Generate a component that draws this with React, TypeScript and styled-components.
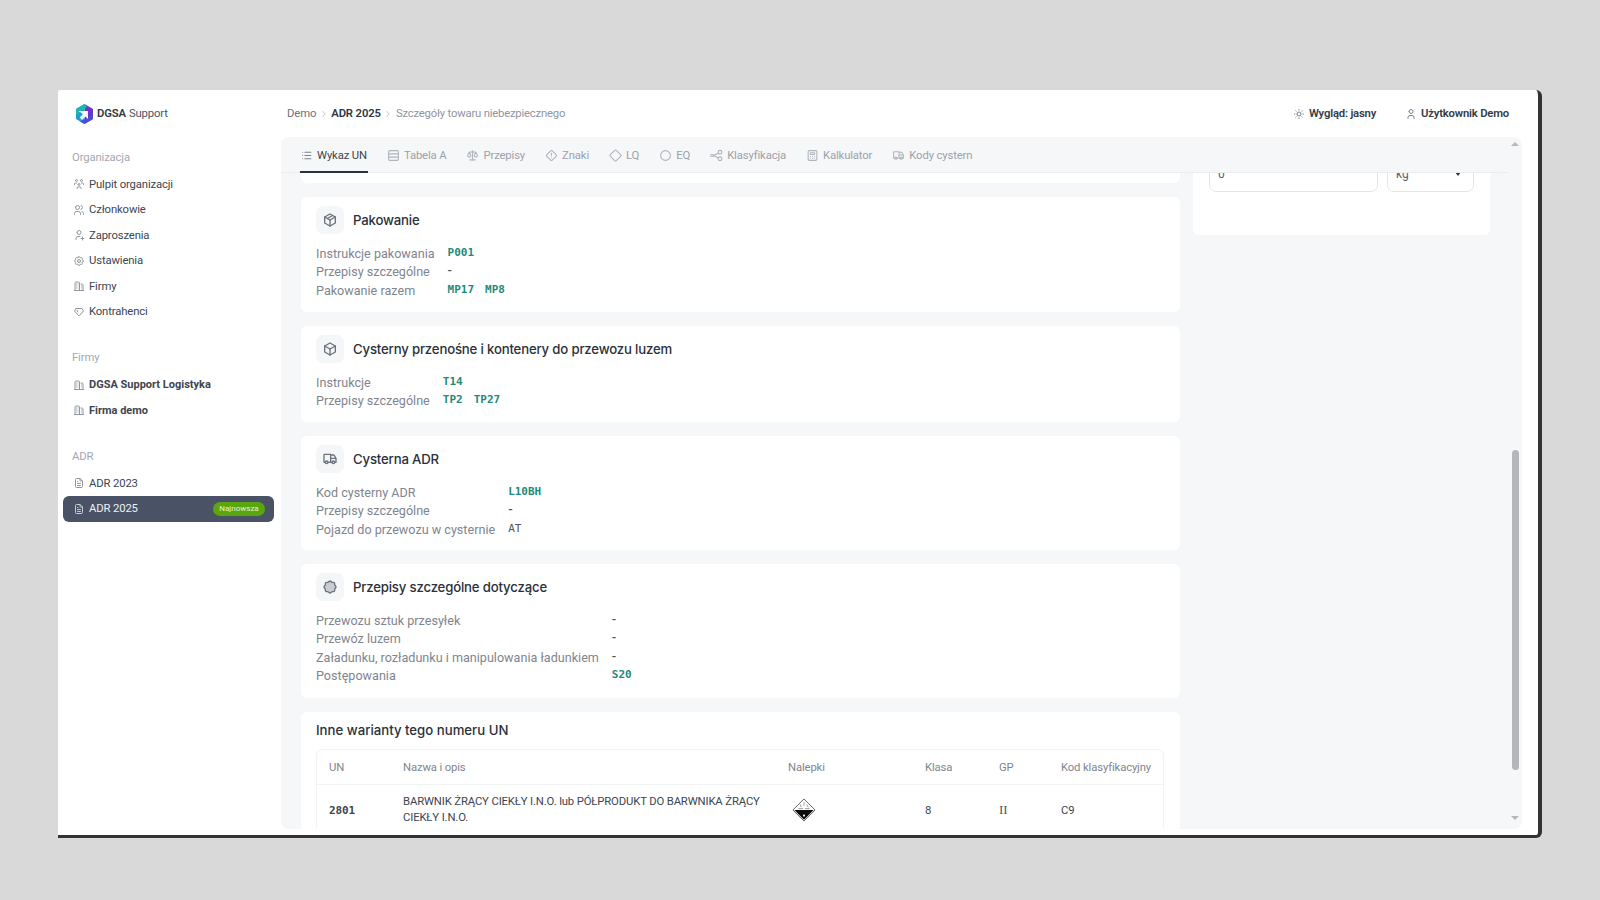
import React from "react";
import styled, { createGlobalStyle } from "styled-components";
import {
  TbUsersGroup, TbUsers, TbUserPlus, TbSettings, TbBuildings, TbDiamond, TbFileText,
  TbSun, TbUser, TbList, TbScale, TbSquareRotated, TbCircle,
  TbCalculator, TbTruck, TbPackage, TbBox, TbRosette, TbChevronRight,
} from "react-icons/tb";
import { Rows3 } from "lucide-react";

const sans = `Roboto, "Noto Sans", "Liberation Sans", sans-serif`;
const head = `Inter, "Open Sans", "Liberation Sans", sans-serif`;
const mono = `"DejaVu Sans Mono", "Liberation Mono", monospace`;

const Global = createGlobalStyle`
  html, body { margin: 0; padding: 0; background: #d9d9d9; }
  body { font-family: ${sans}; }
  * { box-sizing: border-box; }
`;

const Page = styled.div`
  width: 1600px; height: 900px; padding: 90px 0 0 58px; overflow: hidden; background: #d9d9d9;
`;
const Frame = styled.div`
  width: 1484px; height: 748px; display: grid; grid-template-columns: 223px 1fr;
  grid-template-rows: minmax(0, 1fr);
  background: #fff; border-right: 4px solid #333; border-bottom: 3px solid #333;
  border-radius: 2px 6px 6px 0;
`;
const Sidebar = styled.aside`
  padding: 12.5px 7px 0 5px; display: flex; flex-direction: column;
`;
const Brand = styled.div`
  display: flex; align-items: center; gap: 3px; height: 22px; padding-left: 12px; margin-bottom: 24px;
  font-size: 11.3px; letter-spacing: -0.14px; color: #4b5563;
  b { font-weight: 600; color: #2f3742; margin-right: 3px; }
`;
const GroupLabel = styled.div<{ $gap?: number }>`
  height: 18px; line-height: 18px; font-size: 11.3px; letter-spacing: -0.14px; color: #a3a8b0; padding-left: 9px;
  margin-top: ${(p) => p.$gap ?? 0}px; margin-bottom: 5px;
`;
const NavItem = styled.div<{ $bold?: boolean; $active?: boolean }>`
  height: 25.5px; flex: none; display: flex; align-items: center; gap: 4px; padding: 0 10px;
  border-radius: 6px;
  font-size: ${(p) => (p.$bold ? "11px" : "11.3px")};
  letter-spacing: ${(p) => (p.$bold ? "0" : "-0.14px")};
  font-weight: ${(p) => (p.$bold ? 700 : 400)};
  color: ${(p) => (p.$active ? "#eef0f3" : "#3d4550")};
  background: ${(p) => (p.$active ? "#4a5365" : "transparent")};
  svg { color: ${(p) => (p.$active ? "#c7ccd4" : "#9096a0")}; flex: none; }
`;
const Badge = styled.span`
  margin-left: auto; margin-right: -1px; width: 52px; height: 14px; border-radius: 7px; background: #5aa60f;
  color: #e4f3d4; font-size: 8px; letter-spacing: 0; line-height: 14px; text-align: center;
`;
const Main = styled.main`
  display: flex; flex-direction: column; padding: 0 16px 6px 0; min-width: 0; min-height: 0;
`;
const Header = styled.header`
  height: 47px; flex: none; display: flex; align-items: center; padding: 0 13px 0 6px;
  font-size: 11.3px; letter-spacing: -0.13px; color: #6b7280;
`;
const Crumb = styled.span<{ $strong?: boolean; $muted?: boolean }>`
  font-weight: ${(p) => (p.$strong ? 600 : 400)};
  letter-spacing: ${(p) => (p.$muted ? "-0.2px" : "-0.13px")};
  color: ${(p) => (p.$strong ? "#2f3742" : p.$muted ? "#9096a0" : "#6b7280")};
`;
const CrumbSep = styled.span`
  display: inline-flex; margin: 0 2.5px; color: #b5b9c0;
`;
const HeaderActions = styled.div`
  margin-left: auto; display: flex; align-items: center; gap: 29px;
`;
const HeaderAction = styled.div`
  display: flex; align-items: center; gap: 4px; font-size: 11.3px; letter-spacing: -0.2px; font-weight: 600; color: #333b47;
  svg { color: #7b818b; }
`;
const Panel = styled.div`
  flex: 1; min-height: 0; display: flex; background: #f6f7f9; border-radius: 8px; overflow: hidden;
`;
const PanelColumn = styled.div`
  flex: 1; min-width: 0; min-height: 0; display: flex; flex-direction: column;
`;
const Tabs = styled.nav`
  height: 36px; flex: none; display: flex; padding-left: 19px; gap: 19px;
  border-bottom: 1px solid #eaecef;
`;
const Tab = styled.div<{ $active?: boolean }>`
  display: flex; align-items: center; gap: 4px; font-size: 11.3px; letter-spacing: -0.14px; padding: 3px 1px 0 0; margin-bottom: -1px;
  color: ${(p) => (p.$active ? "#3d4550" : "#9ca1a9")};
  border-bottom: 2px solid ${(p) => (p.$active ? "#2b3240" : "transparent")};
  svg { color: ${(p) => (p.$active ? "#7b818b" : "#b0b4bb")}; }
`;
const Scrollbar = styled.div`
  width: 14px; flex: none; display: flex; flex-direction: column; align-items: center;
`;
const ArrowUp = styled.div`
  margin-top: 5px; width: 0; height: 0; border: 4px solid transparent; border-top: 0;
  border-bottom: 4px solid #b5b8bd;
`;
const ArrowDown = styled.div`
  margin-top: 46px; width: 0; height: 0; border: 4px solid transparent; border-bottom: 0;
  border-top: 4px solid #b5b8bd;
`;
const Thumb = styled.div`
  margin-top: 304px; width: 7px; height: 320px; border-radius: 4px; background: #b4b6bb;
`;
const Content = styled.div`
  flex: 1; min-height: 0; overflow: hidden; display: flex; gap: 13px; padding: 0 18px 0 20px; align-items: flex-start;
`;
const LeftColumn = styled.div`
  width: 879px; flex: none; display: flex; flex-direction: column; gap: 14px;
`;
const Stub = styled.div`
  height: 10px; flex: none; background: #fff; border-radius: 0 0 6px 6px;
`;
const Card = styled.section<{ $h: number }>`
  flex: none; background: #fff; border-radius: 6px; padding: 9px 15px 0; height: ${(p) => p.$h}px;
`;
const CardHead = styled.div`
  display: flex; align-items: center; gap: 9px; height: 28px; margin-bottom: 10px;
`;
const IconBox = styled.div`
  width: 28px; height: 28px; border-radius: 7px; background: #f5f6f8; display: flex;
  align-items: center; justify-content: center; color: #6c727c;
`;
const CardTitle = styled.h3`
  margin: -1px 0 0; font-family: ${head}; font-size: 13.2px; font-weight: 500; color: #2b303a; letter-spacing: -0.18px;
`;
const Rows = styled.div`
  display: grid; grid-template-columns: max-content 1fr; column-gap: 13px; grid-auto-rows: 18.5px;
  align-items: center;
`;
const Label = styled.div`
  font-size: 12.6px; color: #7f858e; white-space: nowrap;
`;
const Values = styled.div`
  display: flex; gap: 11px; margin-top: -2px;
`;
const Code = styled.span<{ $tone?: "teal" | "dark" | "muted" }>`
  font-family: ${mono}; font-size: 11px;
  font-weight: ${(p) => (p.$tone === "muted" ? 400 : 700)};
  color: ${(p) => (p.$tone === "dark" ? "#3d4550" : p.$tone === "muted" ? "#4b5563" : "#1f8a78")};
`;
const Dash = styled.span`
  font-size: 13px; font-weight: 500; color: #4b5563;
`;
const VariantsCard = styled.section`
  flex: none; background: #fff; border-radius: 6px; padding: 10px 15px 0; height: 140px;
`;
const VariantsTitle = styled.h3`
  margin: 0 0 10px; height: 17px; line-height: 17px; font-family: ${head}; font-size: 13.2px; font-weight: 500; color: #2b303a;
`;
const Table = styled.div`
  border: 1px solid #f2f3f5; border-radius: 6px 6px 0 0; width: 848px;
`;
const TableRow = styled.div<{ $head?: boolean }>`
  display: grid; grid-template-columns: 74px 385px 137px 74px 62px 1fr; padding-left: 12px; align-items: center;
  height: ${(p) => (p.$head ? 35 : 50)}px;
  font-size: 11.3px; letter-spacing: -0.14px; color: ${(p) => (p.$head ? "#7f858e" : "#3d4550")};
  border-bottom: ${(p) => (p.$head ? "1px solid #f2f3f5" : "0")};
`;
const Description = styled.div`
  line-height: 16px; padding-right: 10px;
`;
const SerifValue = styled.span`
  font-family: "Liberation Serif", serif; font-size: 13px; letter-spacing: 0; color: #4b5563;
`;
const PlacardCell = styled.div`
  display: flex; padding-left: 4px;
`;
const SideCard = styled.aside`
  width: 297px; flex: none; height: 62px; background: #fff; border-radius: 0 0 6px 6px; padding: 0 16px;
  display: flex; gap: 9px; overflow: hidden;
`;
const Field = styled.div<{ $w: number }>`
  width: ${(p) => p.$w}px; height: 40px; margin-top: -21px; flex: none; display: flex; align-items: center;
  justify-content: space-between; padding: 4px 12px 0 8px; border: 1px solid #e3e5e8; border-radius: 7px;
  font-size: 12px; color: #5b626c; background: #fff;
`;
const Caret = styled.span`
  width: 0; height: 0; border: 3.5px solid transparent; border-bottom: 0; border-top: 4px solid #333;
`;

const Logo = () => (
  <svg width="19" height="20" viewBox="0 0 19 20" aria-hidden>
    <polygon points="9.5,0 18,5 18,15 9.5,20" fill="#6a35c9" />
    <polygon points="9.5,0 1,5 1,15 9.5,20" fill="#1f9fd0" />
    <polygon points="1,5 9.5,0 12,3 5,9 1,12" fill="#1fb6b0" />
    <polygon points="9.5,20 5,17.4 12,14 18,11 18,15" fill="#4a4fd8" />
    <path d="M3.5 7 H13 V15 L10.4 12.4 L7 16 L4.8 13.6 L8 10 Z" fill="#fff" />
  </svg>
);

const Placard = () => (
  <svg width="24" height="24" viewBox="0 0 26 26" aria-hidden>
    <polygon points="13,1 25,13 13,25 1,13" fill="#fff" stroke="#333" strokeWidth="0.8" />
    <polygon points="2.5,13 23.5,13 13,23.5" fill="#0c0c0c" />
    <path d="M9 7 l1 3 M13 4.5 v4 M16 7 l1.5 3 M7 11.5 h5 M14 11.5 h5" stroke="#888" strokeWidth="0.9" fill="none" />
    <rect x="12" y="18" width="2" height="2" fill="#fff" />
  </svg>
);

const AlertRhombus = ({ size = 13 }: { size?: number }) => (
  <svg width={size} height={size} viewBox="0 0 24 24" fill="none" stroke="currentColor" strokeWidth="2" strokeLinecap="round" strokeLinejoin="round" aria-hidden>
    <path d="M10.6 3.4 L3.4 10.6 a2 2 0 0 0 0 2.8 L10.6 20.6 a2 2 0 0 0 2.8 0 L20.6 13.4 a2 2 0 0 0 0 -2.8 L13.4 3.4 a2 2 0 0 0 -2.8 0 Z" />
    <path d="M12 8 v4 M12 16 v.01" />
  </svg>
);

const BranchNodes = ({ size = 13 }: { size?: number }) => (
  <svg width={size} height={size} viewBox="0 0 24 24" fill="none" stroke="currentColor" strokeWidth="2" strokeLinecap="round" strokeLinejoin="round" aria-hidden>
    <circle cx="18.5" cy="6" r="3.5" />
    <circle cx="18.5" cy="18" r="3.5" />
    <path d="M1 10.5 h6 M1 13.5 h6 M7 12 L15.5 7.5 M7 12 L15.5 16.5" />
  </svg>
);

const FilledRosette = () => <TbRosette size={16} fill="#c9ccd1" />;

const org: [React.ElementType, string][] = [
  [TbUsersGroup, "Pulpit organizacji"], [TbUsers, "Członkowie"], [TbUserPlus, "Zaproszenia"],
  [TbSettings, "Ustawienia"], [TbBuildings, "Firmy"], [TbDiamond, "Kontrahenci"],
];
const tabs: [React.ElementType, string][] = [
  [TbList, "Wykaz UN"], [Rows3, "Tabela A"], [TbScale, "Przepisy"], [AlertRhombus, "Znaki"],
  [TbSquareRotated, "LQ"], [TbCircle, "EQ"], [BranchNodes, "Klasyfikacja"], [TbCalculator, "Kalkulator"], [TbTruck, "Kody cystern"],
];

export default function App() {
  return (
    <Page>
      <Global />
      <Frame>
        <Sidebar>
          <Brand><Logo /><span><b>DGSA</b>Support</span></Brand>
          <GroupLabel>Organizacja</GroupLabel>
          {org.map(([I, t]) => <NavItem key={t}><I size={12} />{t}</NavItem>)}
          <GroupLabel $gap={24.5}>Firmy</GroupLabel>
          <NavItem $bold><TbBuildings size={12} />DGSA Support Logistyka</NavItem>
          <NavItem $bold><TbBuildings size={12} />Firma demo</NavItem>
          <GroupLabel $gap={24.5}>ADR</GroupLabel>
          <NavItem><TbFileText size={12} />ADR 2023</NavItem>
          <NavItem $active><TbFileText size={12} />ADR 2025<Badge>Najnowsza</Badge></NavItem>
        </Sidebar>
        <Main>
          <Header>
            <Crumb>Demo</Crumb>
            <CrumbSep><TbChevronRight size={10} /></CrumbSep>
            <Crumb $strong>ADR 2025</Crumb>
            <CrumbSep><TbChevronRight size={10} /></CrumbSep>
            <Crumb $muted>Szczegóły towaru niebezpiecznego</Crumb>
            <HeaderActions>
              <HeaderAction><TbSun size={12} />Wygląd: jasny</HeaderAction>
              <HeaderAction><TbUser size={12} />Użytkownik Demo</HeaderAction>
            </HeaderActions>
          </Header>
          <Panel>
            <PanelColumn>
              <Tabs>
                {tabs.map(([I, t], i) => <Tab key={t} $active={i === 0}><I size={13} />{t}</Tab>)}
              </Tabs>
              <Content>
                <LeftColumn>
                  <Stub />
                  <Card $h={115}>
                    <CardHead><IconBox><TbPackage size={16} /></IconBox><CardTitle>Pakowanie</CardTitle></CardHead>
                    <Rows>
                      <Label>Instrukcje pakowania</Label><Values><Code>P001</Code></Values>
                      <Label>Przepisy szczególne</Label><Values><Dash>-</Dash></Values>
                      <Label>Pakowanie razem</Label><Values><Code>MP17</Code><Code>MP8</Code></Values>
                    </Rows>
                  </Card>
                  <Card $h={96}>
                    <CardHead><IconBox><TbBox size={16} /></IconBox><CardTitle>Cysterny przenośne i kontenery do przewozu luzem</CardTitle></CardHead>
                    <Rows>
                      <Label>Instrukcje</Label><Values><Code>T14</Code></Values>
                      <Label>Przepisy szczególne</Label><Values><Code>TP2</Code><Code>TP27</Code></Values>
                    </Rows>
                  </Card>
                  <Card $h={114}>
                    <CardHead><IconBox><TbTruck size={16} /></IconBox><CardTitle>Cysterna ADR</CardTitle></CardHead>
                    <Rows>
                      <Label>Kod cysterny ADR</Label><Values><Code>L10BH</Code></Values>
                      <Label>Przepisy szczególne</Label><Values><Dash>-</Dash></Values>
                      <Label>Pojazd do przewozu w cysternie</Label><Values><Code $tone="muted">AT</Code></Values>
                    </Rows>
                  </Card>
                  <Card $h={134}>
                    <CardHead><IconBox><FilledRosette /></IconBox><CardTitle>Przepisy szczególne dotyczące</CardTitle></CardHead>
                    <Rows>
                      <Label>Przewozu sztuk przesyłek</Label><Values><Dash>-</Dash></Values>
                      <Label>Przewóz luzem</Label><Values><Dash>-</Dash></Values>
                      <Label>Załadunku, rozładunku i manipulowania ładunkiem</Label><Values><Dash>-</Dash></Values>
                      <Label>Postępowania</Label><Values><Code>S20</Code></Values>
                    </Rows>
                  </Card>
                  <VariantsCard>
                    <VariantsTitle>Inne warianty tego numeru UN</VariantsTitle>
                    <Table>
                      <TableRow $head>
                        <span>UN</span><span>Nazwa i opis</span><span>Nalepki</span><span>Klasa</span><span>GP</span><span>Kod klasyfikacyjny</span>
                      </TableRow>
                      <TableRow>
                        <Code $tone="dark">2801</Code>
                        <Description>BARWNIK ŻRĄCY CIEKŁY I.N.O. lub PÓŁPRODUKT DO BARWNIKA ŻRĄCY CIEKŁY I.N.O.</Description>
                        <PlacardCell><Placard /></PlacardCell>
                        <span>8</span>
                        <SerifValue>II</SerifValue>
                        <span>C9</span>
                      </TableRow>
                    </Table>
                  </VariantsCard>
                </LeftColumn>
                <SideCard>
                  <Field $w={169}>0</Field>
                  <Field $w={87}>kg<Caret /></Field>
                </SideCard>
              </Content>
            </PanelColumn>
            <Scrollbar>
              <ArrowUp />
              <Thumb />
              <ArrowDown />
            </Scrollbar>
          </Panel>
        </Main>
      </Frame>
    </Page>
  );
}
